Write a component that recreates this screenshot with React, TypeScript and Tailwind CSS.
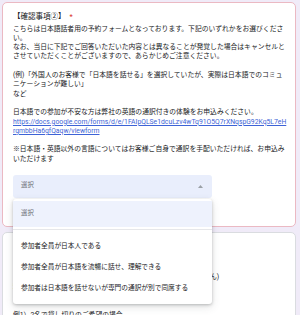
import React from "react";

const Line = ({ children, className = "" }: { children?: React.ReactNode; className?: string }) => (
  <div className={"whitespace-nowrap h-[9.3px] leading-[9.3px] " + className}>{children ?? "\u00a0"}</div>
);

export default function App() {
  return (
    <div className="w-[300px] h-[315px] overflow-hidden bg-[#f0ebf8] pt-[2px] font-[family-name:Roboto,'Noto_Sans_CJK_JP',sans-serif] text-[#202124]">
      <div className="relative ml-[2px] w-[294px] h-[225px] bg-white border border-[#ebb9c3] rounded-[5px] px-[10px] pt-[8px]">
        <div className="whitespace-nowrap text-[7.5px] leading-[12px] h-[12px]">
          【確認事項②】<span className="ml-[4px] text-[#d93025]">*</span>
        </div>
        <div className="mt-[1.6px] text-[6.8px]">
          <Line>こちらは日本語話者用の予約フォームとなっております。下記のいずれかをお選びくださ</Line>
          <Line>い。</Line>
          <Line>なお、当日に下記でご回答いただいた内容とは異なることが発覚した場合はキャンセルと</Line>
          <Line>させていただくことがございますので、あらかじめご注意ください。</Line>
          <Line />
          <Line>(例)「外国人のお客様で「日本語を話せる」を選択していたが、実際は日本語でのコミュ</Line>
          <Line>ニケーションが難しい」</Line>
          <Line>など</Line>
          <Line />
          <Line>日本語での参加が不安な方は弊社の英語の通訳付きの体験をお申込みください。</Line>
          <Line className="text-[#3d63d6] underline">https://docs.google.com/forms/d/e/1FAIpQLSe1dcuLzv4wTq91O5Q7rXNqspG92Kq5L7eH</Line>
          <Line className="text-[#3d63d6] underline">rgmbbHa6gfQaqw/viewform</Line>
          <Line />
          <Line>※日本語・英語以外の言語についてはお客様ご自身で通訳を手配いただければ、お申込み</Line>
          <Line>いただけます</Line>
        </div>
        <div className="relative mt-[10.6px] w-[199px]">
          <div className="h-[23px] rounded-[3px] bg-[#e9eefc] flex items-center justify-between pl-[8px] pr-[9px]">
            <span className="text-[6.4px] text-[#6b6f74]">選択</span>
            <svg width="5" height="3" viewBox="0 0 5 3" className="block">
              <path d="M0 3 L2.5 0 L5 3 Z" fill="#9aa0a6" />
            </svg>
          </div>
          <div className="absolute z-10 left-0 top-[24px] w-[199px] h-[105px] bg-white rounded-[3px] shadow-[0_1px_3px_rgba(60,64,67,0.3),0_3px_8px_rgba(60,64,67,0.15)] pt-[2px]">
            <div className="h-[26px] bg-[#eef2fd] flex items-center pl-[8px] text-[6.4px] text-[#6b6f74]">選択</div>
            <div className="mt-[2px] h-px bg-[#e6e7ea]" />
            <div className="mt-[5.3px] text-[6.7px]">
              <div className="h-[21.3px] flex items-center pl-[8px] whitespace-nowrap">参加者全員が日本人である</div>
              <div className="h-[21.3px] flex items-center pl-[8px] whitespace-nowrap">参加者全員が日本語を流暢に話せ、理解できる</div>
              <div className="h-[21.3px] flex items-center pl-[8px] whitespace-nowrap">参加者は日本語を話せないが専門の通訳が別で同席する</div>
            </div>
          </div>
        </div>
      </div>
      <div className="ml-[2px] mt-[5px] w-[294px] h-[200px] bg-white border border-[#dadce0] rounded-[5px] px-[10px] pt-[12px]">
        <div className="whitespace-nowrap text-[7.5px] leading-[12px] h-[12px]">
          【ご参加人数】<span className="ml-[4px] text-[#d93025]">*</span>
        </div>
        <div className="mt-[7px] text-[6.8px]">
          <Line>ご参加される人数をお選びください。</Line>
          <Line>ご参加人数をご記入ください（乳幼児のお子様は人数に含みません)</Line>
          <Line>料金は人数により異なります。</Line>
          <Line />
          <div className="mt-[10px]">
            <Line>例1）2名で貸し切りのご希望の場合</Line>
          </div>
        </div>
      </div>
    </div>
  );
}
